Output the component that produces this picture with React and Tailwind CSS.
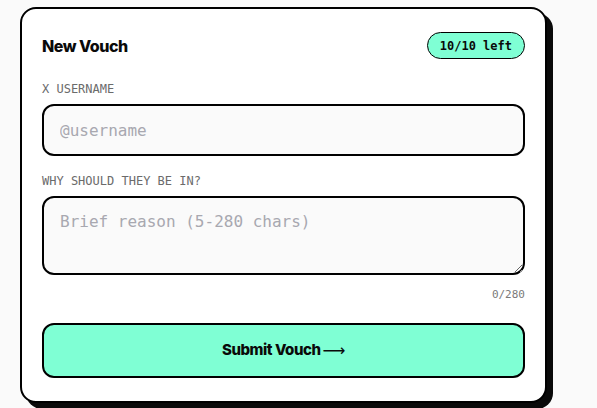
import React, { useState } from 'react';

const App = () => {
  const [reason, setReason] = useState('');

  return (
    <div className="min-h-[408px] w-full bg-[#fafafa] pt-[7px] pl-[20px]">
      <div className="w-[527px] rounded-2xl border-2 border-black bg-white px-5 pt-[23px] pb-[23px] shadow-[6px_6px_0_0_#0a0a0a]">
        <div className="flex items-center justify-between">
          <h2 className="font-['Inter',sans-serif] text-[16px] font-extrabold tracking-[-0.03em] text-[#0a0a0a]">New Vouch</h2>
          <span className="flex h-[27px] items-center rounded-full border border-black bg-[#7fffd4] px-[12px] font-['DejaVu_Sans_Mono',monospace] text-[12px] font-bold text-[#0a0a0a]">
            10/10 left
          </span>
        </div>

        <label className="mt-[22px] block font-['DejaVu_Sans_Mono',monospace] text-[12px] leading-4 text-[#6b6b6b]">X USERNAME</label>
        <input
          placeholder="@username"
          className="mt-[7px] block h-[52px] w-full rounded-xl border-2 border-black bg-[#fafafa] px-4 font-['DejaVu_Sans_Mono',monospace] text-[16px] text-[#0a0a0a] outline-none placeholder:text-[#a8a8b0]"
        />

        <label className="mt-[17px] block font-['DejaVu_Sans_Mono',monospace] text-[12px] leading-4 text-[#6b6b6b]">WHY SHOULD THEY BE IN?</label>
        <textarea
          value={reason}
          onChange={(e) => setReason(e.target.value)}
          placeholder="Brief reason (5-280 chars)"
          className="mt-[7px] block h-[79px] w-full rounded-xl border-2 border-black bg-[#fafafa] px-4 py-3 font-['DejaVu_Sans_Mono',monospace] text-[16px] leading-6 text-[#0a0a0a] outline-none placeholder:text-[#a8a8b0]"
        />
        <div className="mt-[12px] text-right font-['DejaVu_Sans_Mono',monospace] text-[11px] leading-4 text-[#7a7a7a]">{reason.length}/280</div>

        <button className="mt-[20px] flex h-[55px] w-full items-center justify-center rounded-xl border-2 border-black bg-[#7fffd4] font-['Inter',sans-serif] text-[15px] font-extrabold tracking-[-0.03em] text-[#0a0a0a]">
          Submit Vouch<span className="ml-[2px] font-['DejaVu_Sans',sans-serif] text-[16px] font-normal">⟶</span>
        </button>
      </div>
    </div>
  );
};

export default App;
